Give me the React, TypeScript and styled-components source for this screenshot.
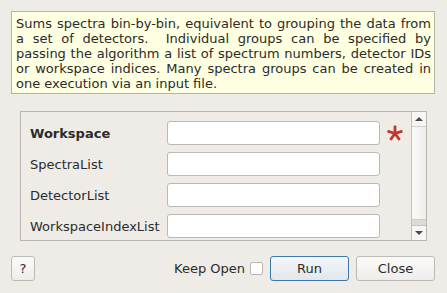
import React from "react";
import styled, { createGlobalStyle } from "styled-components";

const GlobalStyle = createGlobalStyle`
  html, body {
    margin: 0;
    padding: 0;
    background: #efebe7;
  }
  body {
    font-family: "DejaVu Sans", "Liberation Sans", sans-serif;
    font-size: 13px;
    color: #2b2b2b;
  }
`;

const descLines = [
  "Sums spectra bin-by-bin, equivalent to grouping the data from",
  "a set of detectors.\u00a0 Individual groups can be specified by",
  "passing the algorithm a list of spectrum numbers, detector IDs",
  "or workspace indices. Many spectra groups can be created in",
  "one execution via an input file.",
];

const properties = [
  { name: "Workspace", mandatory: true },
  { name: "SpectraList", mandatory: false },
  { name: "DetectorList", mandatory: false },
  { name: "WorkspaceIndexList", mandatory: false },
];

const App = () => {
  return (
    <Dialog>
      <GlobalStyle />
      <Description>
        {descLines.map((l, i) => (
          <Line key={i} $last={i === descLines.length - 1}>
            {l}
          </Line>
        ))}
      </Description>

      <ScrollArea>
        <PropList>
          {properties.map((p) => (
            <PropRow key={p.name}>
              <PropLabel $bold={p.mandatory}>{p.name}</PropLabel>
              <TextInput />
              <Star>{p.mandatory ? <StarIcon /> : null}</Star>
            </PropRow>
          ))}
        </PropList>
        <ScrollBar>
          <ArrowBtn>
            <Tri $up />
          </ArrowBtn>
          <Handle />
          <Track />
          <ArrowBtn $bottom>
            <Tri />
          </ArrowBtn>
        </ScrollBar>
      </ScrollArea>

      <Footer>
        <Button $w={24}>?</Button>
        <Spacer />
        <KeepOpen>
          Keep Open
          <Check />
        </KeepOpen>
        <Button $w={79} $default>
          Run
        </Button>
        <Button $w={79}>Close</Button>
      </Footer>
    </Dialog>
  );
};

function StarIcon() {
  // red "mandatory" asterisk
  return (
    <svg width="16" height="16" viewBox="0 0 16 16">
      <g fill="#c0392b">
        <rect x="6.6" y="0.5" width="2.8" height="9" rx="1" />
        <rect x="6.6" y="0.5" width="2.8" height="9" rx="1" transform="rotate(72 8 8.5)" />
        <rect x="6.6" y="0.5" width="2.8" height="9" rx="1" transform="rotate(144 8 8.5)" />
        <rect x="6.6" y="0.5" width="2.8" height="9" rx="1" transform="rotate(216 8 8.5)" />
        <rect x="6.6" y="0.5" width="2.8" height="9" rx="1" transform="rotate(288 8 8.5)" />
      </g>
    </svg>
  );
}

const Dialog = styled.div`
  width: 447px;
  height: 293px;
  box-sizing: border-box;
  padding: 11px 12px 11px 11px;
  display: flex;
  flex-direction: column;
`;

const Description = styled.div`
  height: 83px;
  box-sizing: border-box;
  background: #ffffe1;
  border: 1px solid #b6b4a8;
  padding: 4px 3px 0 4px;
  line-height: 15px;
`;

const Line = styled.div<{ $last?: boolean }>`
  text-align: justify;
  text-align-last: ${(p) => (p.$last ? "left" : "justify")};
  white-space: nowrap;
`;

const ScrollArea = styled.div`
  margin: 17px 8px 0 9px;
  height: 130px;
  box-sizing: border-box;
  border: 1px solid #b9b5b0;
  display: flex;
  overflow: hidden;
`;

const PropList = styled.div`
  flex: 1;
  padding: 9px 0 0 9px;
  display: flex;
  flex-direction: column;
  gap: 7px;
`;

const PropRow = styled.div`
  display: flex;
  align-items: center;
  height: 24px;
`;

const PropLabel = styled.div<{ $bold?: boolean }>`
  width: 137px;
  font-weight: ${(p) => (p.$bold ? "bold" : "normal")};
  white-space: nowrap;
`;

const TextInput = styled.div`
  width: 213px;
  height: 24px;
  box-sizing: border-box;
  background: #fff;
  border: 1px solid #bcb8b3;
  border-radius: 3px;
`;

const Star = styled.div`
  width: 16px;
  height: 16px;
  margin-left: 7px;
  display: flex;
`;

const ScrollBar = styled.div`
  width: 14px;
  border-left: 1px solid #c4c0bb;
  display: flex;
  flex-direction: column;
  background: #f4f3f1;
`;

const ArrowBtn = styled.div<{ $bottom?: boolean }>`
  height: 14px;
  display: flex;
  align-items: center;
  justify-content: center;
  background: #f7f6f5;
  border-bottom: ${(p) => (p.$bottom ? "none" : "1px solid #d2cfcb")};
  border-top: ${(p) => (p.$bottom ? "1px solid #c6c3bf" : "none")};
`;

const Tri = styled.div<{ $up?: boolean }>`
  width: 0;
  height: 0;
  border-left: 4px solid transparent;
  border-right: 4px solid transparent;
  ${(p) =>
    p.$up
      ? "border-bottom: 4px solid #4a4a4a;"
      : "border-top: 4px solid #4a4a4a;"}
`;

const Handle = styled.div`
  flex: 1;
  background: linear-gradient(to right, #fbfbfa, #eeedeb);
`;

const Track = styled.div`
  height: 5px;
  background: #dedbd7;
  border-top: 1px solid #cfccc8;
`;

const Footer = styled.div`
  margin-top: 15px;
  display: flex;
  align-items: center;
  gap: 7px;
`;

const Spacer = styled.div`
  flex: 1;
`;

const Button = styled.div<{ $w: number; $default?: boolean }>`
  width: ${(p) => p.$w}px;
  height: 25px;
  box-sizing: border-box;
  border-radius: 3px;
  border: 1px solid ${(p) => (p.$default ? "#3d78ad" : "#bdb9b4")};
  background: ${(p) =>
    p.$default
      ? "linear-gradient(#f4f6f8, #e2e7ec)"
      : "linear-gradient(#fbfbfa, #efedeb)"};
  display: flex;
  align-items: center;
  justify-content: center;
  color: #2b2b2b;
`;

const KeepOpen = styled.label`
  display: flex;
  align-items: center;
  gap: 5px;
`;

const Check = styled.span`
  width: 13px;
  height: 13px;
  box-sizing: border-box;
  background: #fff;
  border: 1px solid #bbb7b2;
  border-radius: 2px;
`;

export default App;
